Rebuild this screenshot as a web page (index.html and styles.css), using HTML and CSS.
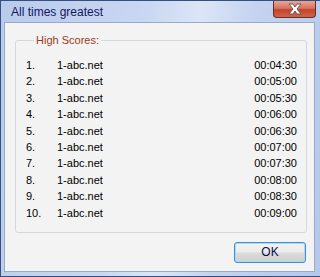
FILE: index.html
```html
<!DOCTYPE html>
<html lang="en">
<head>
    <meta charset="UTF-8">
    <title>All times greatest</title>
    <link rel="stylesheet" href="styles.css">
</head>
<body>
    <div class="window">
        <div class="titlebar">
            <span class="title">All times greatest</span>
            <div class="close">
                <svg width="20" height="12" viewBox="0 0 20 12">
                    <path d="M4 1 L8 1 L10 4 L12 1 L16 1 L12 6 L16 11 L12 11 L10 8 L8 11 L4 11 L8 6 Z" fill="#fff" stroke="#6a5a5a" stroke-width="1"/>
                </svg>
            </div>
        </div>
        <div class="client">
            <fieldset class="group">
                <legend>High Scores:</legend>
                <div class="row"><span class="num">1.</span><span class="name">1-abc.net</span><span class="time">00:04:30</span></div>
                <div class="row"><span class="num">2.</span><span class="name">1-abc.net</span><span class="time">00:05:00</span></div>
                <div class="row"><span class="num">3.</span><span class="name">1-abc.net</span><span class="time">00:05:30</span></div>
                <div class="row"><span class="num">4.</span><span class="name">1-abc.net</span><span class="time">00:06:00</span></div>
                <div class="row"><span class="num">5.</span><span class="name">1-abc.net</span><span class="time">00:06:30</span></div>
                <div class="row"><span class="num">6.</span><span class="name">1-abc.net</span><span class="time">00:07:00</span></div>
                <div class="row"><span class="num">7.</span><span class="name">1-abc.net</span><span class="time">00:07:30</span></div>
                <div class="row"><span class="num">8.</span><span class="name">1-abc.net</span><span class="time">00:08:00</span></div>
                <div class="row"><span class="num">9.</span><span class="name">1-abc.net</span><span class="time">00:08:30</span></div>
                <div class="row"><span class="num">10.</span><span class="name">1-abc.net</span><span class="time">00:09:00</span></div>
            </fieldset>
            <div class="buttons">
                <button class="ok">OK</button>
            </div>
        </div>
    </div>
</body>
</html>
```

FILE: styles.css
```css
/* General */
body {
    margin: 0;
    background: #fff;
    font-family: "Liberation Sans", Arial, sans-serif;
}

/* Window frame */
.window {
    width: 320px;
    height: 277px;
    box-sizing: border-box;
    border: 1px solid #34507e;
    border-right: none;
    background: linear-gradient(100deg, #b9cbec 0%, #c8d7f2 40%, #dbe5f7 55%, #c3d3f0 70%, #b4c8ea 100%);
    padding: 0 5px 4px 3px;
    display: flex;
    flex-direction: column;
}

/* Title bar */
.titlebar {
    height: 21px;
    display: flex;
    align-items: flex-start;
}

.title {
    font-size: 12px;
    color: #15175e;
    margin: 4px 0 0 7px;
}

.close {
    margin-left: auto;
    margin-right: -1px;
    width: 43px;
    height: 17px;
    box-sizing: border-box;
    border: 1px solid #6b2c22;
    border-top: none;
    border-radius: 0 0 4px 4px;
    background: linear-gradient(#e9a596 0%, #d9735d 45%, #c3432a 55%, #d0644a 100%);
    display: flex;
    align-items: center;
    justify-content: center;
}

.close svg {
    display: block;
}

/* Client area */
.client {
    flex: 1;
    background: #f3f3f3;
    border: 1px solid #97aac8;
    display: flex;
    flex-direction: column;
    font-size: 11px;
    color: #000;
}

/* Group box */
.group {
    margin: 11px 7px 0 10px;
    padding: 10px 9px 11px 10px;
    border: 1px solid #d2d8dc;
    border-radius: 3px;
    min-width: 0;
}

.group legend {
    color: #9c3a1a;
    padding: 0 2px;
    margin-left: 8px;
    line-height: 13px;
}

.row {
    display: flex;
    height: 16.4px;
    line-height: 16.4px;
}

.num {
    width: 31px;
}

.time {
    margin-left: auto;
}

/* Buttons */
.buttons {
    display: flex;
    justify-content: flex-end;
    margin: 9px 8px 0 0;
}

.ok {
    width: 72px;
    height: 21px;
    padding: 0;
    font-family: "Liberation Sans", Arial, sans-serif;
    font-size: 12px;
    color: #0c0c50;
    border: 1px solid #3c8fd2;
    border-radius: 3px;
    box-shadow: inset 0 0 0 1px #a8dcf6;
    background: linear-gradient(#f3f3f3 0%, #ebebeb 48%, #dcdcdc 52%, #cfcfcf 100%);
}
```
